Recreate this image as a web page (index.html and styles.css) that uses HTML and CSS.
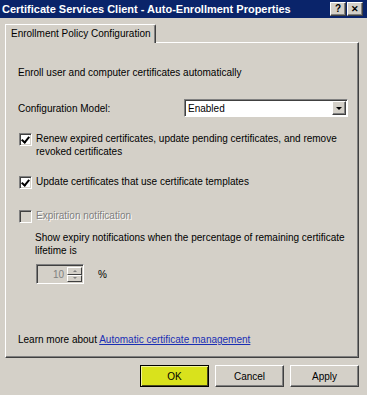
FILE: index.html
```html
<!DOCTYPE html>
<html lang="en">
<head>
  <meta charset="UTF-8">
  <title>Certificate Services Client - Auto-Enrollment Properties</title>
  <link rel="stylesheet" href="styles.css">
</head>
<body>
  <div class="window">
    <div class="titlebar">
      <span class="title">Certificate Services Client - Auto-Enrollment Properties</span>
      <div class="caption-btns">
        <span class="cbtn">?</span>
        <span class="cbtn close">&#x2715;</span>
      </div>
    </div>

    <div class="main">
      <div class="tabstrip">
        <div class="tab">Enrollment Policy Configuration</div>
      </div>

      <div class="panel">
        <p class="intro">Enroll user and computer certificates automatically</p>

        <div class="field-row">
          <span>Configuration Model:</span>
          <div class="combo">
            <span class="combo-value">Enabled</span>
            <span class="combo-btn"><span class="arrow"></span></span>
          </div>
        </div>

        <label class="check-row renew">
          <span class="check checked"></span>
          <span>Renew expired certificates, update pending certificates, and remove revoked certificates</span>
        </label>

        <label class="check-row update">
          <span class="check checked"></span>
          <span>Update certificates that use certificate templates</span>
        </label>

        <label class="check-row expiry disabled">
          <span class="check"></span>
          <span>Expiration notification</span>
        </label>

        <p class="expiry-note">Show expiry notifications when the percentage of remaining certificate lifetime is</p>

        <div class="spin-row">
          <div class="spin">
            <span class="spin-value">10</span>
            <span class="spin-btns">
              <span class="spin-btn"><span class="up"></span></span>
              <span class="spin-btn"><span class="down"></span></span>
            </span>
          </div>
          <span class="percent">%</span>
        </div>

        <p class="learn">Learn more about <a href="#">Automatic certificate management</a></p>
      </div>

      <div class="actions">
        <button class="btn default">OK</button>
        <button class="btn">Cancel</button>
        <button class="btn">Apply</button>
      </div>
    </div>
  </div>
</body>
</html>
```

FILE: styles.css
```css
:root {
  --face: #d4d0c8;
  --light: #ffffff;
  --shadow: #808080;
  --dark: #404040;
}

* {
  margin: 0;
  padding: 0;
  box-sizing: border-box;
}

body {
  background: var(--face);
  font-family: 'Liberation Sans', Arial, sans-serif;
  font-size: 10px;
  line-height: 13px;
  color: #000;
  overflow: hidden;
}

.window {
  width: 367px;
  height: 395px;
  background: var(--face);
}

.titlebar {
  height: 18px;
  background: #0a246a;
  display: flex;
  align-items: center;
  justify-content: space-between;
  padding: 0 4px 0 2px;
}

.title {
  color: #fff;
  font-weight: bold;
  font-size: 11px;
}

.caption-btns {
  display: flex;
  gap: 1px;
}

.cbtn {
  width: 16px;
  height: 14px;
  background: var(--face);
  border: 1px solid;
  border-color: var(--light) var(--dark) var(--dark) var(--light);
  box-shadow: inset -1px -1px var(--shadow);
  display: flex;
  align-items: center;
  justify-content: center;
  font-weight: bold;
  font-size: 10px;
  line-height: 1;
}

.cbtn.close {
  font-size: 9px;
}

.main {
  padding: 6px 8px 0 5px;
}

.tabstrip {
  display: flex;
  height: 18px;
}

.tab {
  width: 151px;
  height: 19px;
  padding: 2px 0 0 5px;
  background: var(--face);
  border-top: 1px solid var(--light);
  border-left: 1px solid var(--light);
  border-right: 1px solid var(--dark);
  border-top-right-radius: 2px;
  box-shadow: inset -1px 0 var(--shadow);
  position: relative;
  z-index: 1;
}

.panel {
  height: 316px;
  border: 1px solid;
  border-color: var(--light) var(--dark) var(--dark) var(--light);
  box-shadow: inset -1px -1px var(--shadow);
  padding: 0 10px 0 12px;
}

.intro {
  margin-top: 23px;
}

.field-row {
  margin-top: 20px;
  display: flex;
  align-items: center;
  justify-content: space-between;
}

.combo {
  width: 164px;
  height: 18px;
  background: #fff;
  border: 1px solid;
  border-color: var(--shadow) var(--light) var(--light) var(--shadow);
  box-shadow: inset 1px 1px var(--dark);
  display: flex;
  align-items: center;
  padding: 1px 1px 1px 3px;
}

.combo-value {
  flex: 1;
}

.combo-btn {
  width: 14px;
  height: 14px;
  background: var(--face);
  border: 1px solid;
  border-color: var(--light) var(--dark) var(--dark) var(--light);
  box-shadow: inset -1px -1px var(--shadow);
  display: flex;
  align-items: center;
  justify-content: center;
}

.arrow,
.down {
  width: 0;
  height: 0;
  border-left: 3px solid transparent;
  border-right: 3px solid transparent;
  border-top: 3px solid #000;
}

.up {
  width: 0;
  height: 0;
  border-left: 2px solid transparent;
  border-right: 2px solid transparent;
  border-bottom: 2px solid var(--shadow);
}

.spin-btn .down {
  border-left-width: 2px;
  border-right-width: 2px;
  border-top: 2px solid var(--shadow);
}

.check-row {
  display: flex;
  align-items: flex-start;
  gap: 4px;
  padding-left: 1px;
}

.check-row.renew {
  margin-top: 15px;
}

.check-row.update {
  margin-top: 17px;
}

.check-row.expiry {
  margin-top: 20px;
}

.check {
  flex: none;
  width: 13px;
  height: 13px;
  margin-top: 1px;
  background: #fff;
  border: 1px solid;
  border-color: var(--shadow) var(--light) var(--light) var(--shadow);
  box-shadow: inset 1px 1px var(--dark), inset -1px -1px var(--face);
  position: relative;
}

.check.checked::after {
  content: '';
  position: absolute;
  left: 3px;
  top: 1px;
  width: 3px;
  height: 6px;
  border: solid #000;
  border-width: 0 2px 2px 0;
  transform: rotate(40deg);
}

.disabled .check {
  background: var(--face);
}

.disabled span:last-child {
  color: var(--shadow);
  text-shadow: 1px 1px #fff;
}

.expiry-note {
  margin: 8px 0 0 17px;
}

.spin-row {
  margin: 7px 0 0 18px;
  display: flex;
  align-items: center;
}

.spin {
  width: 48px;
  height: 20px;
  border: 1px solid;
  border-color: var(--shadow) var(--light) var(--light) var(--shadow);
  box-shadow: inset 1px 1px var(--dark);
  display: flex;
  padding: 2px 1px 1px 2px;
}

.spin-value {
  flex: 1;
  text-align: right;
  padding-right: 3px;
  color: var(--shadow);
  line-height: 15px;
}

.spin-btns {
  display: flex;
  flex-direction: column;
  width: 15px;
}

.spin-btn {
  flex: 1;
  background: var(--face);
  border: 1px solid;
  border-color: var(--light) var(--dark) var(--dark) var(--light);
  display: flex;
  align-items: center;
  justify-content: center;
}

.percent {
  margin-left: 14px;
}

.learn {
  margin-top: 49px;
}

.learn a {
  color: #1a2fb4;
}

.actions {
  margin-top: 7px;
  display: flex;
  justify-content: flex-end;
  gap: 6px;
}

.btn {
  width: 69px;
  height: 22px;
  font: inherit;
  background: var(--face);
  border: 1px solid;
  border-color: var(--light) var(--dark) var(--dark) var(--light);
  box-shadow: inset -1px -1px var(--shadow);
}

.btn.default {
  background: #d9e21c;
  border: 1px solid #000;
  box-shadow: inset 1px 1px #f2f59a, inset -1px -1px #4a4a20;
}
```
